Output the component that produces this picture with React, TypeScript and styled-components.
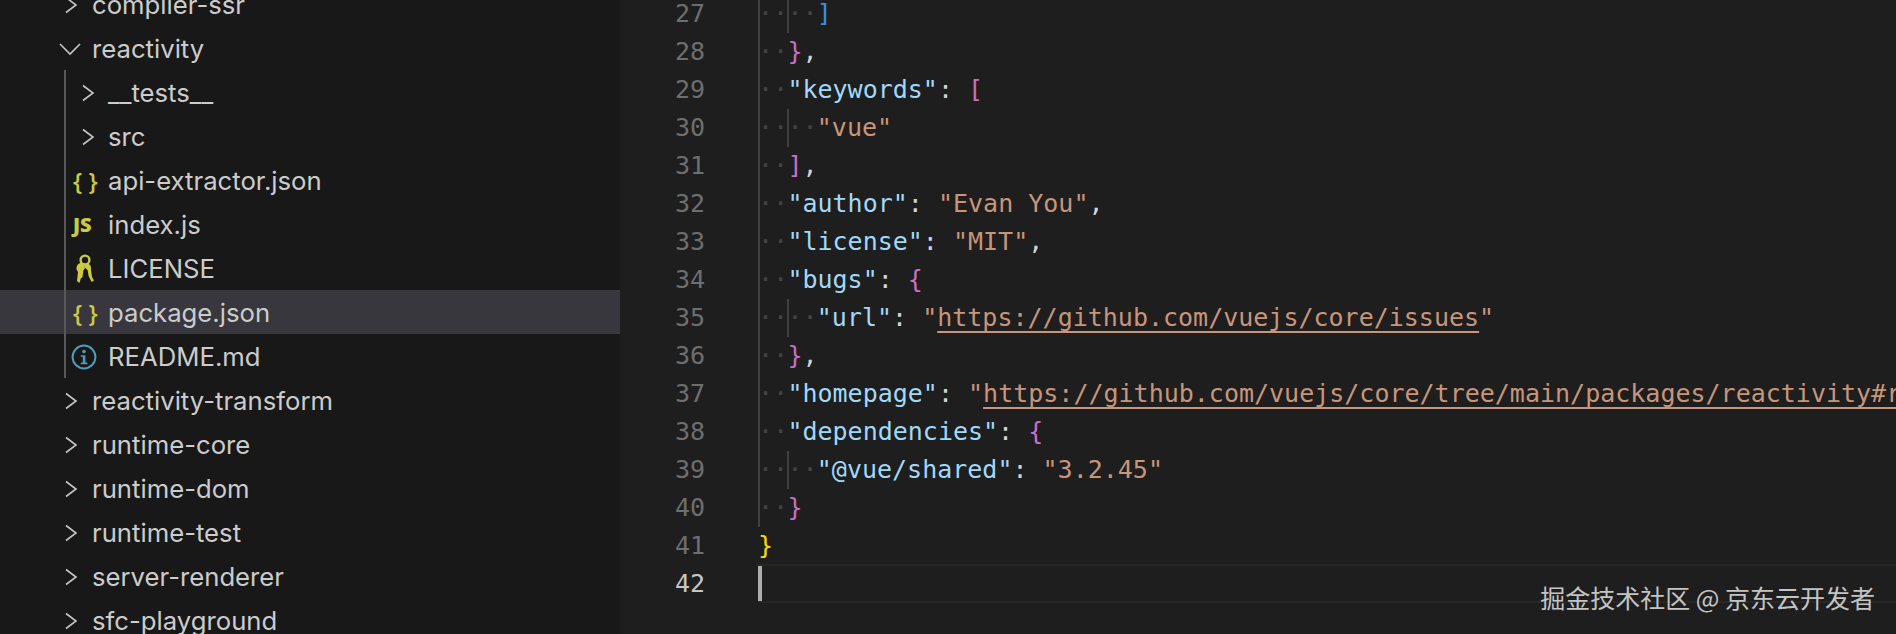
import React from 'react';
import styled, { createGlobalStyle } from 'styled-components';

const GlobalStyle = createGlobalStyle`
    html, body {
        margin: 0;
        padding: 0;
        background: #1e1e1e;
        overflow: hidden;
    }
`;

const Workbench = styled.div`
    display: flex;
    width: 1896px;
    height: 634px;
    overflow: hidden;
`;

const Sidebar = styled.div`
    flex: 0 0 620px;
    height: 100%;
    overflow: hidden;
    background: #181818;
    font-family: Inter, 'Liberation Sans', sans-serif;
    font-size: 25.7px;
    color: #cccccc;
`;

// the tree is scrolled, first row is cut by the top edge
const Tree = styled.div`
    margin-top: -18px;
`;

const Group = styled.div`
    position: relative;

    &::before {
        content: '';
        position: absolute;
        left: 64px;
        top: 0;
        bottom: 0;
        width: 2px;
        background: #585858;
        z-index: 1;
    }
`;

const Row = styled.div<{ $level: number; $selected?: boolean }>`
    display: flex;
    align-items: center;
    box-sizing: border-box;
    height: 44px;
    padding-top: 1px;
    padding-left: ${(p) => (p.$level === 0 ? 60 : 71)}px;
    background: ${(p) => (p.$selected ? '#37373d' : 'transparent')};
    white-space: pre;
`;

const IconSlot = styled.span<{ $level: number }>`
    flex: 0 0 ${(p) => (p.$level === 0 ? 32 : 37)}px;
    display: flex;
    align-items: center;
    justify-content: flex-start;
    color: #cbcb41;
`;

const BraceIcon = styled.span`
    font-family: 'Open Sans', sans-serif;
    font-size: 24px;
    font-weight: 600;
    line-height: 24px;
    margin-left: 2px;
    white-space: pre;
`;

const JsIcon = styled.span`
    font-family: 'Open Sans', sans-serif;
    font-size: 20px;
    font-weight: 800;
    line-height: 24px;
    margin-left: 2px;
`;

const Chevron = ({ open, inner }: { open?: boolean; inner?: boolean }) => (
    <svg
        width='22'
        height='22'
        viewBox='0 0 22 22'
        fill='none'
        stroke='#c5c5c5'
        strokeWidth='1.6'
        style={{ marginLeft: open ? -1 : inner ? 7 : 1 }}
    >
        {open ? <path d='M1 6l10 10L21 6' /> : <path d='M5 3.5L15 11 5 18.5' />}
    </svg>
);

const KeyIcon = () => (
    <svg width='18' height='30' viewBox='0 0 18 30' fill='#cbcb41' style={{ marginLeft: 5 }}>
        <circle cx='9' cy='6' r='4.4' fill='none' stroke='#cbcb41' strokeWidth='2.4' />
        <path d='M4 9c-3 1.5-4 4-3.4 6.5l1.4 2.5-1 9 2.4 2 1.6-5 1.4-.5 1-7 1.6-2.5-1-5z' />
        <path d='M8 11l4-1.5c2.4 1 3.6 3.4 3 6l1 7.5 2 3.500-2.400 1.500-3-6-1-6-2.400-2z' />
    </svg>
);

const InfoIcon = () => (
    <svg width='26' height='26' viewBox='0 0 26 26' fill='none' style={{ marginLeft: 0 }}>
        <circle cx='13' cy='13' r='11.4' stroke='#519aba' strokeWidth='2' />
        <circle cx='13' cy='7.6' r='1.8' fill='#519aba' />
        <path d='M9.8 11.2h4.6v7.4h2v1.6H9.8v-1.6h2V12.8h-2z' fill='#519aba' />
    </svg>
);

type TreeItem = { label: string; icon: React.ReactNode; selected?: boolean };

const nested: TreeItem[] = [
    { label: '__tests__', icon: <Chevron inner /> },
    { label: 'src', icon: <Chevron inner /> },
    { label: 'api-extractor.json', icon: <BraceIcon>{'{ }'}</BraceIcon> },
    { label: 'index.js', icon: <JsIcon>JS</JsIcon> },
    { label: 'LICENSE', icon: <KeyIcon /> },
    { label: 'package.json', icon: <BraceIcon>{'{ }'}</BraceIcon>, selected: true },
    { label: 'README.md', icon: <InfoIcon /> },
];

const after = ['reactivity-transform', 'runtime-core', 'runtime-dom', 'runtime-test', 'server-renderer', 'sfc-playground'];

const Editor = styled.div`
    position: relative;
    flex: 1;
    min-width: 0;
    height: 100%;
    overflow: hidden;
    background: #1e1e1e;
    font-family: 'DejaVu Sans Mono', 'Liberation Mono', monospace;
    font-size: 25px;
`;

// same as the tree: scrolled, line 27 sits partly above the edge
const Lines = styled.div`
    margin-top: -5px;
`;

const Line = styled.div`
    display: flex;
    height: 38px;
    line-height: 38px;
    white-space: pre;
`;

const LineNumber = styled.div<{ $current?: boolean }>`
    flex: 0 0 138px;
    box-sizing: border-box;
    padding-right: 53px;
    text-align: right;
    color: ${(p) => (p.$current ? '#c6c6c6' : '#6e6e6e')};
`;

const Code = styled.div<{ $current?: boolean }>`
    flex: 1;
    min-width: 0;
    display: flex;
    overflow: hidden;
    ${(p) => p.$current && 'box-sizing: border-box; border-top: 2px solid #272727; border-bottom: 2px solid #272727; margin-top: -1px; height: 39px;'}
`;

const Cursor = styled.span`
    flex: 0 0 4px;
    height: 39px;
    margin-top: -2px;
    background: #aeafad;
`;

const Indent = styled.span<{ $guide?: boolean }>`
    position: relative;
    flex: 0 0 auto;
    width: 29.4px;
    color: #444444;

    &::before {
        content: '';
        display: ${(p) => (p.$guide ? 'block' : 'none')};
        position: absolute;
        left: 0;
        top: 0;
        bottom: 0;
        width: 2px;
        background: #404040;
    }
`;

const tokenColors = {
    key: '#a2d8f8',
    str: '#c9957a',
    punct: '#d4d4d4',
    gold: '#ffd700',
    purple: '#c96fc4',
    blue: '#3a8ee0',
};

const Token = styled.span<{ $kind: keyof typeof tokenColors }>`
    color: ${(p) => tokenColors[p.$kind]};
`;

const Link = styled.span`
    color: ${tokenColors.str};
    text-decoration: underline;
    text-decoration-thickness: 2px;
    text-underline-offset: 5px;
    text-decoration-skip-ink: none;
`;

const Watermark = styled.div`
    position: absolute;
    right: 21px;
    bottom: 22px;
    font-family: 'Noto Sans CJK SC', sans-serif;
    font-size: 25px;
    line-height: 30px;
    color: #c4c4c4;
    white-space: pre;
`;

type Part = [keyof typeof tokenColors | 'link', string];
type CodeLine = { n: number; depth: number; inner?: boolean; parts: Part[] };

const code: CodeLine[] = [
    { n: 27, depth: 2, inner: true, parts: [['blue', ']']] },
    { n: 28, depth: 1, parts: [['purple', '}'], ['punct', ',']] },
    { n: 29, depth: 1, parts: [['key', '"keywords"'], ['punct', ': '], ['purple', '[']] },
    { n: 30, depth: 2, inner: true, parts: [['str', '"vue"']] },
    { n: 31, depth: 1, parts: [['purple', ']'], ['punct', ',']] },
    { n: 32, depth: 1, parts: [['key', '"author"'], ['punct', ': '], ['str', '"Evan You"'], ['punct', ',']] },
    { n: 33, depth: 1, parts: [['key', '"license"'], ['punct', ': '], ['str', '"MIT"'], ['punct', ',']] },
    { n: 34, depth: 1, parts: [['key', '"bugs"'], ['punct', ': '], ['purple', '{']] },
    {
        n: 35,
        depth: 2,
        inner: true,
        parts: [['key', '"url"'], ['punct', ': '], ['str', '"'], ['link', 'https://github.com/vuejs/core/issues'], ['str', '"']],
    },
    { n: 36, depth: 1, parts: [['purple', '}'], ['punct', ',']] },
    {
        n: 37,
        depth: 1,
        parts: [
            ['key', '"homepage"'],
            ['punct', ': '],
            ['str', '"'],
            ['link', 'https://github.com/vuejs/core/tree/main/packages/reactivity#readme'],
            ['str', '"'],
            ['punct', ','],
        ],
    },
    { n: 38, depth: 1, parts: [['key', '"dependencies"'], ['punct', ': '], ['purple', '{']] },
    { n: 39, depth: 2, inner: true, parts: [['key', '"@vue/shared"'], ['punct', ': '], ['str', '"3.2.45"']] },
    { n: 40, depth: 1, parts: [['purple', '}']] },
    { n: 41, depth: 0, parts: [['gold', '}']] },
];

export default function App() {
    return (
        <Workbench>
            <GlobalStyle />
            <Sidebar>
                <Tree>
                    <Row $level={0}>
                        <IconSlot $level={0}>
                            <Chevron />
                        </IconSlot>
                        compiler-ssr
                    </Row>
                    <Row $level={0}>
                        <IconSlot $level={0}>
                            <Chevron open />
                        </IconSlot>
                        reactivity
                    </Row>
                    <Group>
                        {nested.map((item) => (
                            <Row key={item.label} $level={1} $selected={item.selected}>
                                <IconSlot $level={1}>{item.icon}</IconSlot>
                                {item.label}
                            </Row>
                        ))}
                    </Group>
                    {after.map((label) => (
                        <Row key={label} $level={0}>
                            <IconSlot $level={0}>
                                <Chevron />
                            </IconSlot>
                            {label}
                        </Row>
                    ))}
                </Tree>
            </Sidebar>
            <Editor>
                <Lines>
                    {code.map((line) => (
                        <Line key={line.n}>
                            <LineNumber>{line.n}</LineNumber>
                            <Code>
                                {line.depth > 0 && <Indent $guide>··</Indent>}
                                {line.depth > 1 && <Indent $guide={line.inner}>··</Indent>}
                                <span>
                                    {line.parts.map(([kind, text], i) =>
                                        kind === 'link' ? (
                                            <Link key={i}>{text}</Link>
                                        ) : (
                                            <Token key={i} $kind={kind}>
                                                {text}
                                            </Token>
                                        ),
                                    )}
                                </span>
                            </Code>
                        </Line>
                    ))}
                    <Line>
                        <LineNumber $current>42</LineNumber>
                        <Code $current>
                            <Cursor />
                        </Code>
                    </Line>
                </Lines>
                <Watermark>掘金技术社区 @ 京东云开发者</Watermark>
            </Editor>
        </Workbench>
    );
}
